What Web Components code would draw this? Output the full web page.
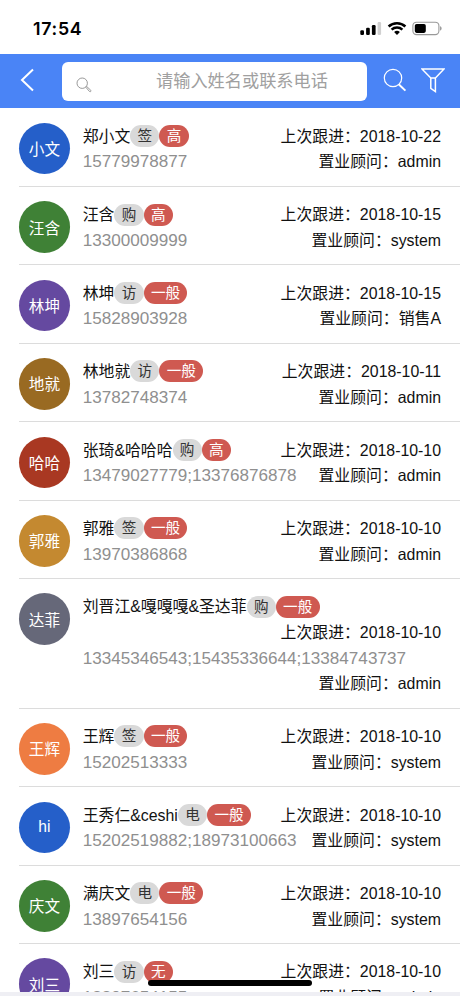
<!DOCTYPE html>
<html lang="zh-CN">
<head>
<meta charset="utf-8">
<title>客户列表</title>
<style>
  body {
    margin: 0;
    background: #fff;
    color: #111;
    font-family: "Liberation Sans", "Noto Sans CJK SC", sans-serif;
  }
</style>
</head>
<body>
<customer-app></customer-app>

<script>
class StatusBar extends HTMLElement {
  constructor() {
    super();
    this.attachShadow({mode: 'open'})
  }

  connectedCallback() {
    this.shadowRoot.innerHTML = `
    <style>
      :host {
        display: flex;
        flex: none;
        box-sizing: border-box;
        height: 54px;
        padding: 3px 18px 0 33px;
        align-items: center;
        justify-content: space-between;
        color: #000;
      }
      span {
        font: 600 17.8px/22px Inter, sans-serif;
        letter-spacing: 0.7px;
      }
      svg { display: block; }
    </style>
    <span>${this.getAttribute('time')}</span>
    <svg width="82" height="16" viewBox="0 0 82 16">
      <rect x="0.3" y="9.2" width="3.7" height="4.8" rx="1.2"/>
      <rect x="6.1" y="6.8" width="3.7" height="7.2" rx="1.2"/>
      <rect x="11.9" y="4" width="3.7" height="10" rx="1.2"/>
      <rect x="17.6" y="1" width="3.5" height="13" rx="1.2" fill="#d0d0d0"/>
      <g fill="none" stroke="#000" stroke-width="2.5">
        <path d="M28.6 5.5a12.2 12.2 0 0 1 16.8 0"/>
        <path d="M31.6 8.7a7.9 7.9 0 0 1 10.8 0"/>
      </g>
      <path d="M37 14l-2.9-3a4.3 4.3 0 0 1 5.8 0z"/>
      <rect x="52.9" y="1.2" width="26" height="12.4" rx="3.6" fill="none" stroke="#999" stroke-width="1.1"/>
      <rect x="54.8" y="3" width="11" height="8.9" rx="1.8"/>
      <path d="M80.2 5.3v4.4c1.8-.6 1.8-3.8 0-4.4z" fill="#888"/>
    </svg>
    `
  }
}
customElements.define('status-bar', StatusBar)


class SearchHeader extends HTMLElement {
  constructor() {
    super();
    this.attachShadow({mode: 'open'})
  }

  connectedCallback() {
    this.shadowRoot.innerHTML = `
    <style>
      :host {
        display: flex;
        flex: none;
        box-sizing: border-box;
        height: 54px;
        align-items: center;
        padding: 0 15px 2px 20px;
        background: #4a84f6;
      }
      svg { display: block; flex: none; fill: none; }
      .field {
        display: flex;
        box-sizing: border-box;
        width: 305px;
        height: 39px;
        margin: 2px 16px 0 25.5px;
        padding: 0 0 0 14px;
        align-items: center;
        border-radius: 6px;
        background: #fff;
      }
      .field span {
        flex: 1;
        padding-left: 64.5px;
        color: #a0a0a0;
        font-size: 17.2px;
        line-height: 24px;
        white-space: nowrap;
      }
      .field svg { margin-top: 8px; }
      .filter { margin-left: 14px; }
    </style>
    <svg width="16" height="26" viewBox="0 0 16 26" stroke="#fff" stroke-width="2"><path d="M13 2.5L2 13l11 10.5"/></svg>
    <div class="field">
      <svg width="16" height="16" viewBox="0 0 16 16" stroke="#999">
        <circle cx="6.2" cy="6.2" r="5.2"/>
        <path d="M9.8 10.2l.8-.8 4.2 3.9q.5.7-.1 1.2t-1.2 0z"/>
      </svg>
      <span>${this.getAttribute('placeholder')}</span>
    </div>
    <svg width="24" height="24" viewBox="0 0 24 24" stroke="#fff">
      <circle cx="10" cy="10" r="8.7" stroke-width="1.2"/>
      <path d="M15.7 16.2l6.7 6.4" stroke-width="2"/>
    </svg>
    <svg class="filter" width="24" height="26" viewBox="0 0 24 26" stroke="#fff" stroke-width="1.5">
      <path d="M1 2h22l-8.6 9v13.5l-4.6-3.2V11zM9.8 11h4.6"/>
    </svg>
    `
  }
}
customElements.define('search-header', SearchHeader)


class TagPill extends HTMLElement {
  constructor() {
    super();
    this.attachShadow({mode: 'open'})
  }

  connectedCallback() {
    this.shadowRoot.innerHTML = `
    <style>
      :host {
        display: block;
        height: 22px;
        margin-top: -1px;
        padding: 0 7.3px;
        border-radius: 11px;
        background: #d9d9d9;
        color: #333;
        font-size: 14.6px;
        line-height: 22px;
      }
      :host([level]) { background: #cf5951; color: #fff; }
    </style>
    <slot></slot>
    `
  }
}
customElements.define('tag-pill', TagPill)


class CustomerRow extends HTMLElement {
  constructor() {
    super();
    this.attachShadow({mode: 'open'})
  }

  connectedCallback() {
    this.shadowRoot.innerHTML = `
    <style>
      :host {
        display: flex;
        flex: none;
        box-sizing: border-box;
        margin-left: 18.6px;
        padding: 14.2px 19px 10.95px 0;
        align-items: flex-start;
        gap: 12.5px;
        border-bottom: 1px solid #dcdcdc;
      }
      .avatar {
        display: flex;
        flex: none;
        box-sizing: border-box;
        width: 51.6px;
        height: 51.6px;
        padding-bottom: 1px;
        align-items: center;
        justify-content: center;
        border-radius: 50%;
        background: ${this.getAttribute('color')};
        color: #fff;
        font-size: 15.6px;
      }
      .info { flex: 1; min-width: 0; padding-top: 1px; }
      .line {
        display: flex;
        flex-wrap: wrap;
        font-size: 15.87px;
        line-height: 25.65px;
        white-space: nowrap;
      }
      .name { display: flex; align-items: center; height: 25.65px; }
      .right { margin-left: auto; }
      .phone { color: #8f8f8f; font-size: 17.1px; }
    </style>
    <div class="avatar">${this.getAttribute('short')}</div>
    <div class="info">
      <div class="line">
        <div class="name"><slot></slot><tag-pill>${this.getAttribute('source')}</tag-pill><tag-pill level>${this.getAttribute('level')}</tag-pill></div>
        <div class="right">上次跟进：${this.getAttribute('date')}</div>
      </div>
      <div class="line">
        <div class="phone">${this.getAttribute('phone')}</div>
        <div class="right">置业顾问：${this.getAttribute('advisor')}</div>
      </div>
    </div>
    `
  }
}
customElements.define('customer-row', CustomerRow)


class CustomerApp extends HTMLElement {
  constructor() {
    super();
    this.attachShadow({mode: 'open'})
  }

  connectedCallback() {
    this.shadowRoot.innerHTML = `
    <style>
      :host {
        display: flex;
        flex-direction: column;
        position: relative;
        height: 996px;
        overflow: hidden;
      }
      .list {
        display: flex;
        flex-direction: column;
        flex: 1;
        min-height: 0;
        padding-top: 0.6px;
        overflow: hidden;
      }
      .bottom { flex: none; height: 4px; background: #efeff4; }
      /* home indicator floats over the list */
      .home {
        position: absolute;
        left: 148px;
        bottom: 10px;
        width: 164px;
        height: 6px;
        border-radius: 3px;
        background: #000;
      }
    </style>
    <status-bar time="17:54"></status-bar>
    <search-header placeholder="请输入姓名或联系电话"></search-header>
    <div class="list">
      <customer-row short="小文" color="#255fc9" source="签" level="高" phone="15779978877" date="2018-10-22" advisor="admin">郑小文</customer-row>
      <customer-row short="汪含" color="#3f8136" source="购" level="高" phone="13300009999" date="2018-10-15" advisor="system">汪含</customer-row>
      <customer-row short="林坤" color="#6549a0" source="访" level="一般" phone="15828903928" date="2018-10-15" advisor="销售A">林坤</customer-row>
      <customer-row short="地就" color="#996a22" source="访" level="一般" phone="13782748374" date="2018-10-11" advisor="admin">林地就</customer-row>
      <customer-row short="哈哈" color="#a93822" source="购" level="高" phone="13479027779;13376876878" date="2018-10-10" advisor="admin">张琦&amp;哈哈哈</customer-row>
      <customer-row short="郭雅" color="#c48930" source="签" level="一般" phone="13970386868" date="2018-10-10" advisor="admin">郭雅</customer-row>
      <customer-row short="达菲" color="#666879" source="购" level="一般" phone="13345346543;15435336644;13384743737" date="2018-10-10" advisor="admin">刘晋江&amp;嘎嘎嘎&amp;圣达菲</customer-row>
      <customer-row short="王辉" color="#ee7c42" source="签" level="一般" phone="15202513333" date="2018-10-10" advisor="system">王辉</customer-row>
      <customer-row short="hi" color="#255fc9" source="电" level="一般" phone="15202519882;18973100663" date="2018-10-10" advisor="system">王秀仁&amp;ceshi</customer-row>
      <customer-row short="庆文" color="#3f8136" source="电" level="一般" phone="13897654156" date="2018-10-10" advisor="system">满庆文</customer-row>
      <customer-row short="刘三" color="#6549a0" source="访" level="无" phone="13897654155" date="2018-10-10" advisor="admin">刘三</customer-row>
    </div>
    <div class="bottom"></div>
    <div class="home"></div>
    `
  }
}
customElements.define('customer-app', CustomerApp)
</script>
</body>
</html>
